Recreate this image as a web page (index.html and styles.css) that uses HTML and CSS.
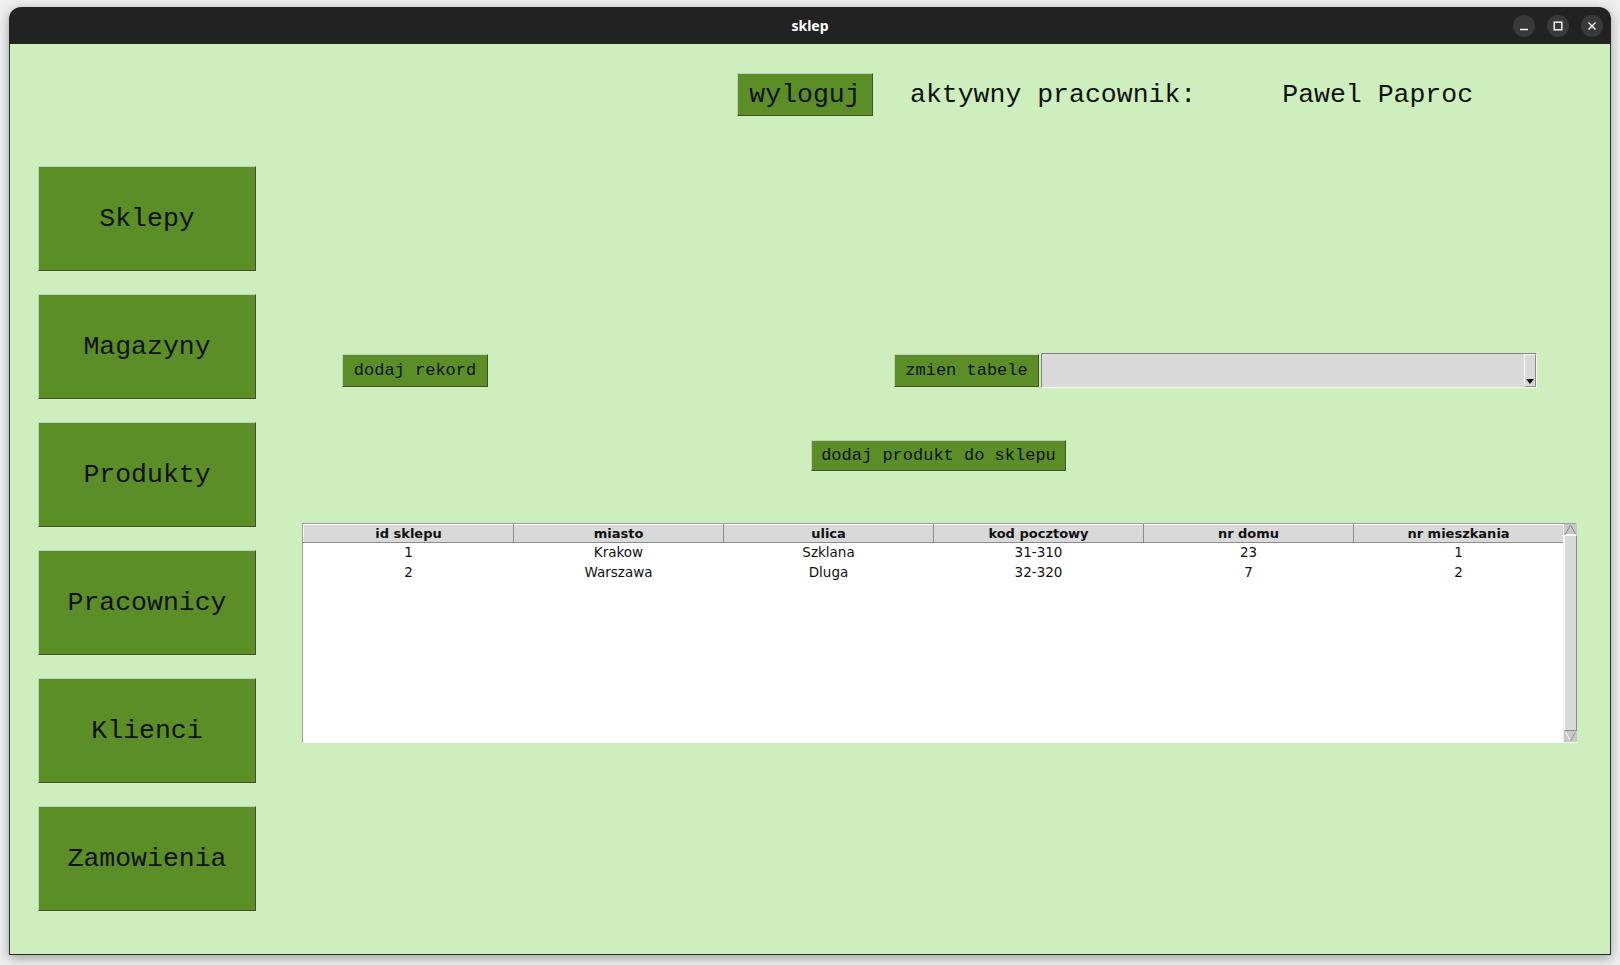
FILE: index.html
```html
<!DOCTYPE html>
<html lang="pl">
<head>
<meta charset="utf-8">
<title>sklep</title>
<link rel="stylesheet" href="styles.css">
</head>
<body>
<div class="window">
  <div class="titlebar">
    <div class="tb-side"></div>
    <div class="tb-title">sklep</div>
    <div class="tb-side tb-buttons">
      <span class="wbtn"><svg width="22" height="22" viewBox="0 0 22 22"><path d="M7 14.5h8" stroke="#fff" stroke-width="1.4" fill="none"/></svg></span>
      <span class="wbtn"><svg width="22" height="22" viewBox="0 0 22 22"><rect x="7.2" y="7.2" width="7.6" height="7.6" stroke="#fff" stroke-width="1.4" fill="none"/></svg></span>
      <span class="wbtn"><svg width="22" height="22" viewBox="0 0 22 22"><path d="M7.5 7.5l7 7M14.5 7.5l-7 7" stroke="#fff" stroke-width="1.4" fill="none"/></svg></span>
    </div>
  </div>
  <div class="content">
    <div class="topbar">
      <div class="btn btn-logout">wyloguj</div>
      <div class="lbl lbl-active">aktywny pracownik:</div>
      <div class="lbl lbl-name">Pawel Paproc</div>
    </div>
    <div class="workarea">
      <div class="sidebar">
        <div class="btn btn-nav">Sklepy</div>
        <div class="btn btn-nav">Magazyny</div>
        <div class="btn btn-nav">Produkty</div>
        <div class="btn btn-nav">Pracownicy</div>
        <div class="btn btn-nav">Klienci</div>
        <div class="btn btn-nav">Zamowienia</div>
      </div>
      <div class="main">
        <div class="row-actions">
          <div class="btn btn-small btn-add">dodaj rekord</div>
          <div class="btn btn-small btn-change">zmien tabele</div>
          <div class="combo">
            <div class="combo-field"></div>
            <div class="combo-arrow"><svg width="8" height="5" viewBox="0 0 8 5"><path d="M0 0h8L4 5z" fill="#111"/></svg></div>
          </div>
        </div>
        <div class="row-product">
          <div class="btn btn-small btn-product">dodaj produkt do sklepu</div>
        </div>
        <div class="tree">
          <div class="tree-body">
            <table class="grid">
              <colgroup>
                <col class="c"><col class="c"><col class="c"><col class="c"><col class="c"><col class="c">
              </colgroup>
              <thead>
                <tr>
                  <th>id sklepu</th><th>miasto</th><th>ulica</th><th>kod pocztowy</th><th>nr domu</th><th>nr mieszkania</th>
                </tr>
              </thead>
              <tbody>
                <tr><td>1</td><td>Krakow</td><td>Szklana</td><td>31-310</td><td>23</td><td>1</td></tr>
                <tr><td>2</td><td>Warszawa</td><td>Dluga</td><td>32-320</td><td>7</td><td>2</td></tr>
              </tbody>
            </table>
          </div>
          <div class="scrollbar">
            <div class="sb-arrow"><svg width="13" height="11" viewBox="0 0 13 11"><path d="M1.5 10L6.5 1l5 9" stroke="#8a8a8a" fill="none"/><path d="M2 10.5h10" stroke="#fff"/></svg></div>
            <div class="sb-slider"></div>
            <div class="sb-arrow"><svg width="13" height="11" viewBox="0 0 13 11"><path d="M1.5 1l5 9 5-9" stroke="#fff" fill="none"/><path d="M6.5 10l5-9" stroke="#8a8a8a" fill="none"/></svg></div>
          </div>
        </div>
      </div>
    </div>
  </div>
</div>
</body>
</html>
```
FILE: styles.css
```css
* { box-sizing: border-box; }
html, body { margin: 0; padding: 0; }
body {
  background: #efefef;
  width: 1620px;
  height: 965px;
  overflow: hidden;
  padding: 7px 0 0 9px;
}
.window {
  width: 1602px;
  border-radius: 12px 12px 0 0;
  box-shadow: 0 3px 12px rgba(0,0,0,0.35);
}
.titlebar {
  height: 37px;
  background: #222222;
  border-radius: 12px 12px 0 0;
  display: grid;
  grid-template-columns: 1fr auto 1fr;
  align-items: center;
}
.tb-title {
  color: #ffffff;
  font-family: "Noto Sans", "DejaVu Sans", sans-serif;
  font-weight: 700;
  font-size: 14px;
  line-height: 37px;
}
.tb-buttons {
  display: flex;
  justify-content: flex-end;
  gap: 12px;
  padding-right: 8px;
}
.wbtn {
  width: 22px;
  height: 22px;
  border-radius: 50%;
  background: #393939;
  display: flex;
}
.content {
  height: 911px;
  background: #cdeebd;
  border: 1px solid #2a2a2a;
  border-top: none;
  display: flex;
  flex-direction: column;
}
.btn {
  background: #5c8e28;
  color: #111;
  font-family: "Liberation Mono", "Courier New", monospace;
  border: 1px solid;
  border-color: #c6cdc0 #3d5522 #3d5522 #c6cdc0;
  display: flex;
  align-items: center;
  justify-content: center;
  white-space: nowrap;
}
.topbar {
  display: flex;
  align-items: center;
  margin-top: 29px;
  padding-left: 727px;
  height: 43px;
}
.btn-logout {
  width: 136px;
  height: 43px;
  font-size: 26.5px;
}
.lbl {
  font-family: "Liberation Mono", "Courier New", monospace;
  font-size: 26.5px;
  color: #111;
  white-space: nowrap;
}
.lbl-active { margin-left: 37px; }
.lbl-name { margin-left: 86px; }
.workarea {
  display: flex;
  margin-top: 50px;
}
.sidebar {
  display: flex;
  flex-direction: column;
  gap: 23px;
  padding-left: 28px;
}
.btn-nav {
  width: 218px;
  height: 105px;
  font-size: 26.5px;
}
.main {
  margin-left: 46px;
  width: 1275px;
  display: flex;
  flex-direction: column;
}
.row-actions {
  margin-top: 187px;
  height: 35px;
  display: flex;
  align-items: center;
}
.btn-small { font-size: 17px; }
.btn-add {
  margin-left: 40px;
  width: 146px;
  height: 33px;
}
.btn-change {
  margin-left: 406px;
  width: 145px;
  height: 33px;
}
.combo {
  margin-left: 2px;
  width: 496px;
  height: 35px;
  display: flex;
  background: #d9d9d9;
  border: 1px solid;
  border-color: #7f7f7f #ffffff #ffffff #7f7f7f;
}
.combo-field { flex: 1; }
.combo-arrow {
  width: 12px;
  border: 1px solid;
  border-color: #ffffff #8a8a8a #8a8a8a #ffffff;
  display: flex;
  align-items: flex-end;
  justify-content: center;
  padding-bottom: 2px;
}
.row-product {
  margin-top: 52px;
  padding-left: 509px;
}
.btn-product {
  width: 255px;
  height: 31px;
}
.tree {
  margin-top: 52px;
  width: 1275px;
  height: 220px;
  display: flex;
  border: 1px solid;
  border-color: #9c9c9c #ffffff #ffffff #9c9c9c;
}
.tree-body {
  width: 1260px;
  background: #ffffff;
}
.grid {
  border-collapse: collapse;
  table-layout: fixed;
  width: 1260px;
  font-family: "DejaVu Sans", sans-serif;
  font-size: 13.5px;
  color: #111;
}
.grid col.c { width: 210px; }
.grid th {
  height: 18px;
  padding: 0 0 1px 0;
  background: #d9d9d9;
  font-weight: 700;
  font-size: 13px;
  line-height: 15px;
  text-align: center;
  border-top: 1px solid #ffffff;
  border-left: 1px solid #ffffff;
  border-right: 1px solid #8c8c8c;
  border-bottom: 1px solid #8c8c8c;
}
.grid td {
  height: 20px;
  padding: 0 0 2px 0;
  text-align: center;
  line-height: 18px;
}
.scrollbar {
  width: 14px;
  background: #d9d9d9;
  display: flex;
  flex-direction: column;
  border-left: 1px solid #eeeeee;
}
.sb-arrow {
  height: 11px;
  display: flex;
  background: #c8c8c8;
}
.sb-slider {
  flex: 1;
  background: #d9d9d9;
  border: 1px solid;
  border-color: #ffffff #8a8a8a #8a8a8a #ffffff;
}
```
